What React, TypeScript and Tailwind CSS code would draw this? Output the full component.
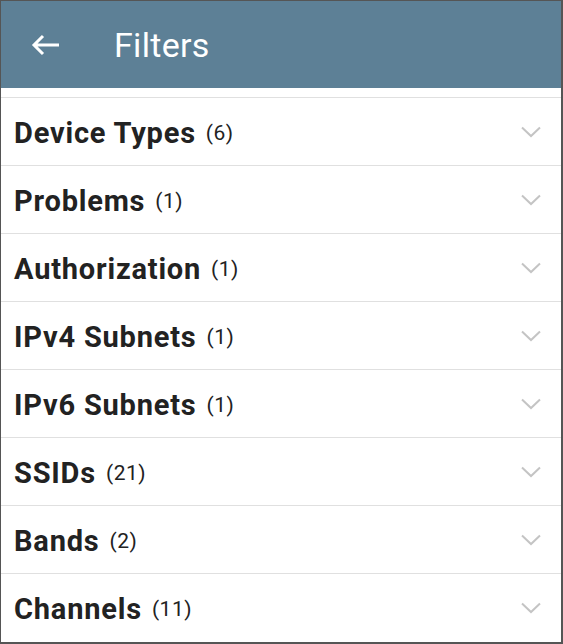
import React from "react";

const items: [string, number][] = [
  ["Device Types", 6],
  ["Problems", 1],
  ["Authorization", 1],
  ["IPv4 Subnets", 1],
  ["IPv6 Subnets", 1],
  ["SSIDs", 21],
  ["Bands", 2],
  ["Channels", 11],
];

function Chevron() {
  return (
    <svg width="20" height="12" viewBox="0 0 20 12" className="shrink-0">
      <polyline points="1,1.5 10,10 19,1.5" fill="none" stroke="#c4c4c4" strokeWidth="2" />
    </svg>
  );
}

export default function App() {
  return (
    <div
      className="w-[563px] h-[644px] bg-white border-l border-t border-r-2 border-b-2 border-[#555] overflow-hidden flex flex-col"
      style={{ fontFamily: "Roboto, 'Noto Sans', sans-serif" }}
    >
      <div className="h-[87px] shrink-0 bg-[#5d8096] flex items-center text-white">
        <svg width="30" height="22" viewBox="0 0 30 22" className="ml-[30px]">
          <path d="M3 11 H28 M12 2 L3 11 L12 20" fill="none" stroke="white" strokeWidth="3" strokeLinecap="butt" strokeLinejoin="miter" />
        </svg>
        <span className="ml-[53px] text-[34px] leading-none tracking-[0.3px]">Filters</span>
      </div>
      <div className="h-[9px] shrink-0" />
      {items.map(([name, count]) => (
        <div
          key={name}
          className="h-[68px] shrink-0 border-t border-[#e0e0e0] flex items-center pl-[13px] pr-[20px]"
        >
          <div className="flex items-center pt-[3px]">
            <span className="text-[29px] font-bold text-[#222] leading-none tracking-[0.8px]">{name}</span>
            <span className="ml-[10px] text-[21px] text-[#222] leading-none tracking-[0.5px]">({count})</span>
          </div>
          <span className="flex-1" />
          <Chevron />
        </div>
      ))}
    </div>
  );
}
